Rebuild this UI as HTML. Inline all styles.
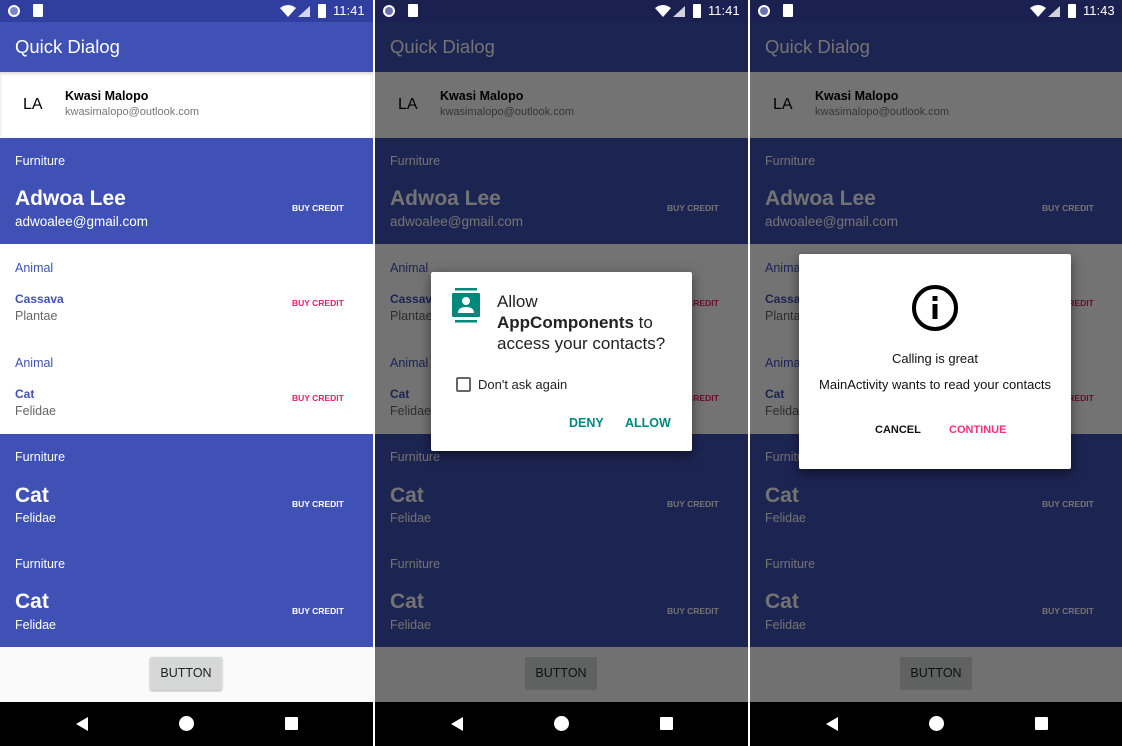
<!DOCTYPE html>
<html><head><meta charset="utf-8"><style>
*{margin:0;padding:0;box-sizing:border-box}
body{width:1122px;height:746px;background:#fff;position:relative;overflow:hidden;font-family:"Liberation Sans",Roboto,sans-serif}
.p{position:absolute;top:0;width:373px;height:746px;overflow:hidden;background:#fafafa}
.a{position:absolute;white-space:nowrap}
.sb{left:0;top:0;width:100%;height:22px;background:#303f9f}
.tb{left:0;top:22px;width:100%;height:50px;background:#3f51b5}
.blue{background:#3f51b5;left:0;width:100%}
.white{background:#fff;left:0;width:100%}
.w{color:#fff}
.bc{font-size:8.5px;font-weight:bold;color:#fff;left:292px}
.pk{color:#e91e63}
.nav{left:0;top:702px;width:100%;height:44px;background:#000}
.dim{left:0;top:0;width:100%;height:702px;background:rgba(0,0,0,.55)}
</style></head><body>

<div class="p" style="left:0">
 <div class="a tb"></div>
 <div class="a w" style="left:15px;top:36px;font-size:18.5px;line-height:22px">Quick Dialog</div>
 <div class="a white" style="top:72px;height:65px;box-shadow:0 2px 3px rgba(0,0,0,.15) inset"></div>
 <div class="a" style="left:23px;top:96px;font-size:16px;line-height:18px">LA</div>
 <div class="a" style="left:65px;top:88px;font-size:12.5px;font-weight:bold;line-height:16px">Kwasi Malopo</div>
 <div class="a" style="left:65px;top:105px;font-size:11px;color:#777;line-height:14px">kwasimalopo@outlook.com</div>
 <div class="a blue" style="top:138px;height:106px"></div>
 <div class="a w" style="left:15px;top:153px;font-size:12.5px;line-height:16px">Furniture</div>
 <div class="a w" style="left:15px;top:186px;font-size:21px;font-weight:bold;line-height:26px">Adwoa Lee</div>
 <div class="a w" style="left:15px;top:214px;font-size:13.5px;line-height:16px">adwoalee@gmail.com</div>
 <div class="a bc" style="top:203px">BUY CREDIT</div>
 <div class="a white" style="top:244px;height:190px"></div>
 <div class="a" style="left:15px;top:260px;font-size:12.5px;color:#3f51b5;line-height:16px">Animal</div>
 <div class="a" style="left:15px;top:292px;font-size:12px;font-weight:bold;color:#3f51b5;line-height:15px">Cassava</div>
 <div class="a" style="left:15px;top:308px;font-size:12.5px;color:#666;line-height:16px">Plantae</div>
 <div class="a bc pk" style="top:298px">BUY CREDIT</div>
 <div class="a" style="left:15px;top:355px;font-size:12.5px;color:#3f51b5;line-height:16px">Animal</div>
 <div class="a" style="left:15px;top:387px;font-size:12px;font-weight:bold;color:#3f51b5;line-height:15px">Cat</div>
 <div class="a" style="left:15px;top:403px;font-size:12.5px;color:#666;line-height:16px">Felidae</div>
 <div class="a bc pk" style="top:393px">BUY CREDIT</div>
 <div class="a blue" style="top:434px;height:213px"></div>
 <div class="a w" style="left:15px;top:449px;font-size:12.5px;line-height:16px">Furniture</div>
 <div class="a w" style="left:15px;top:483px;font-size:21px;font-weight:bold;line-height:26px">Cat</div>
 <div class="a w" style="left:15px;top:510px;font-size:12.5px;line-height:16px">Felidae</div>
 <div class="a bc" style="top:499px">BUY CREDIT</div>
 <div class="a w" style="left:15px;top:556px;font-size:12.5px;line-height:16px">Furniture</div>
 <div class="a w" style="left:15px;top:589px;font-size:21px;font-weight:bold;line-height:26px">Cat</div>
 <div class="a w" style="left:15px;top:617px;font-size:12.5px;line-height:16px">Felidae</div>
 <div class="a bc" style="top:606px">BUY CREDIT</div>
 <div class="a" style="left:150px;top:657px;width:72px;height:33px;background:#d6d7d7;border-radius:2px;box-shadow:0 1px 2px rgba(0,0,0,.3);text-align:center;line-height:33px;font-size:12.5px;color:#222">BUTTON</div>
 <div class="a sb"></div>
 <div class="a" style="left:8px;top:5px;width:12px;height:12px;border-radius:50%;background:#fff;border:2px solid #fff"><div style="width:8px;height:8px;border-radius:50%;background:#7986cb"></div></div>
 <div class="a" style="left:33px;top:4px;width:10px;height:13px;background:#fff;border-radius:1px"></div>
 <svg class="a" style="left:280px;top:4px" width="38" height="14"><path d="M0 4 Q8 -2 16 4 L8 13Z" fill="#fff"/><path d="M18 13 L30 13 L30 2Z" fill="#fff" opacity=".8"/></svg>
 <div class="a" style="left:318px;top:4px;width:8px;height:14px;background:#fff;border-radius:1px"></div>
 <div class="a w" style="left:333px;top:3px;font-size:13px;line-height:16px">11:41</div>
 <div class="a nav"></div>
 <svg class="a" style="left:74px;top:716px" width="16" height="16"><path d="M2 8 L14 1 L14 15Z" fill="#fff"/></svg>
 <div class="a" style="left:179px;top:716px;width:15px;height:15px;border-radius:50%;background:#fff"></div>
 <div class="a" style="left:285px;top:717px;width:13px;height:13px;background:#fff;border-radius:1px"></div>
</div>

<div class="p" style="left:375px">
 <div class="a tb"></div>
 <div class="a w" style="left:15px;top:36px;font-size:18.5px;line-height:22px">Quick Dialog</div>
 <div class="a white" style="top:72px;height:65px"></div>
 <div class="a" style="left:23px;top:96px;font-size:16px;line-height:18px">LA</div>
 <div class="a" style="left:65px;top:88px;font-size:12.5px;font-weight:bold;line-height:16px">Kwasi Malopo</div>
 <div class="a" style="left:65px;top:105px;font-size:11px;color:#777;line-height:14px">kwasimalopo@outlook.com</div>
 <div class="a blue" style="top:138px;height:106px"></div>
 <div class="a w" style="left:15px;top:153px;font-size:12.5px;line-height:16px">Furniture</div>
 <div class="a w" style="left:15px;top:186px;font-size:21px;font-weight:bold;line-height:26px">Adwoa Lee</div>
 <div class="a w" style="left:15px;top:214px;font-size:13.5px;line-height:16px">adwoalee@gmail.com</div>
 <div class="a bc" style="top:203px">BUY CREDIT</div>
 <div class="a white" style="top:244px;height:190px"></div>
 <div class="a" style="left:15px;top:260px;font-size:12.5px;color:#3f51b5;line-height:16px">Animal</div>
 <div class="a" style="left:15px;top:292px;font-size:12px;font-weight:bold;color:#3f51b5;line-height:15px">Cassava</div>
 <div class="a" style="left:15px;top:308px;font-size:12.5px;color:#666;line-height:16px">Plantae</div>
 <div class="a bc pk" style="top:298px">BUY CREDIT</div>
 <div class="a" style="left:15px;top:355px;font-size:12.5px;color:#3f51b5;line-height:16px">Animal</div>
 <div class="a" style="left:15px;top:387px;font-size:12px;font-weight:bold;color:#3f51b5;line-height:15px">Cat</div>
 <div class="a" style="left:15px;top:403px;font-size:12.5px;color:#666;line-height:16px">Felidae</div>
 <div class="a bc pk" style="top:393px">BUY CREDIT</div>
 <div class="a blue" style="top:434px;height:213px"></div>
 <div class="a w" style="left:15px;top:449px;font-size:12.5px;line-height:16px">Furniture</div>
 <div class="a w" style="left:15px;top:483px;font-size:21px;font-weight:bold;line-height:26px">Cat</div>
 <div class="a w" style="left:15px;top:510px;font-size:12.5px;line-height:16px">Felidae</div>
 <div class="a bc" style="top:499px">BUY CREDIT</div>
 <div class="a w" style="left:15px;top:556px;font-size:12.5px;line-height:16px">Furniture</div>
 <div class="a w" style="left:15px;top:589px;font-size:21px;font-weight:bold;line-height:26px">Cat</div>
 <div class="a w" style="left:15px;top:617px;font-size:12.5px;line-height:16px">Felidae</div>
 <div class="a bc" style="top:606px">BUY CREDIT</div>
 <div class="a" style="left:150px;top:657px;width:72px;height:33px;background:#d6d7d7;border-radius:2px;text-align:center;line-height:33px;font-size:12.5px;color:#222">BUTTON</div>
 <div class="a dim"></div>
 <div class="a sb" style="background:#1a2050"></div>
 <div class="a" style="left:8px;top:5px;width:12px;height:12px;border-radius:50%;background:#fff;border:2px solid #fff"><div style="width:8px;height:8px;border-radius:50%;background:#6a72b0"></div></div>
 <div class="a" style="left:33px;top:4px;width:10px;height:13px;background:#fff;border-radius:1px"></div>
 <svg class="a" style="left:280px;top:4px" width="38" height="14"><path d="M0 4 Q8 -2 16 4 L8 13Z" fill="#fff"/><path d="M18 13 L30 13 L30 2Z" fill="#fff" opacity=".8"/></svg>
 <div class="a" style="left:318px;top:4px;width:8px;height:14px;background:#fff;border-radius:1px"></div>
 <div class="a w" style="left:333px;top:3px;font-size:13px;line-height:16px">11:41</div>
 <div class="a nav"></div>
 <svg class="a" style="left:74px;top:716px" width="16" height="16"><path d="M2 8 L14 1 L14 15Z" fill="#fff"/></svg>
 <div class="a" style="left:179px;top:716px;width:15px;height:15px;border-radius:50%;background:#fff"></div>
 <div class="a" style="left:285px;top:717px;width:13px;height:13px;background:#fff;border-radius:1px"></div>
 <div class="a" style="left:56px;top:272px;width:261px;height:179px;background:#fff;border-radius:2px;box-shadow:0 4px 12px rgba(0,0,0,.5)"></div>
 <svg class="a" style="left:77px;top:288px" width="28" height="35"><rect x="3" y="0" width="22" height="2.5" fill="#00897b"/><rect x="3" y="32" width="22" height="2.5" fill="#00897b"/><rect x="0" y="5" width="28" height="24" rx="1" fill="#00897b"/><circle cx="14" cy="13" r="4" fill="#fff"/><path d="M6 25 Q6 19 14 19 Q22 19 22 25Z" fill="#fff"/></svg>
 <div class="a" style="left:122px;top:291px;font-size:17px;line-height:21px;color:#222">Allow<br><b>AppComponents</b> to<br>access your contacts?</div>
 <div class="a" style="left:81px;top:377px;width:15px;height:15px;border:2px solid #666;border-radius:2px"></div>
 <div class="a" style="left:103px;top:377px;font-size:13px;line-height:16px;color:#222">Don't ask again</div>
 <div class="a" style="left:194px;top:416px;font-size:12.5px;font-weight:bold;color:#00897b;line-height:15px">DENY</div>
 <div class="a" style="left:250px;top:416px;font-size:12.5px;font-weight:bold;color:#00897b;line-height:15px">ALLOW</div>
</div>

<div class="p" style="left:750px">
 <div class="a tb"></div>
 <div class="a w" style="left:15px;top:36px;font-size:18.5px;line-height:22px">Quick Dialog</div>
 <div class="a white" style="top:72px;height:65px"></div>
 <div class="a" style="left:23px;top:96px;font-size:16px;line-height:18px">LA</div>
 <div class="a" style="left:65px;top:88px;font-size:12.5px;font-weight:bold;line-height:16px">Kwasi Malopo</div>
 <div class="a" style="left:65px;top:105px;font-size:11px;color:#777;line-height:14px">kwasimalopo@outlook.com</div>
 <div class="a blue" style="top:138px;height:106px"></div>
 <div class="a w" style="left:15px;top:153px;font-size:12.5px;line-height:16px">Furniture</div>
 <div class="a w" style="left:15px;top:186px;font-size:21px;font-weight:bold;line-height:26px">Adwoa Lee</div>
 <div class="a w" style="left:15px;top:214px;font-size:13.5px;line-height:16px">adwoalee@gmail.com</div>
 <div class="a bc" style="top:203px">BUY CREDIT</div>
 <div class="a white" style="top:244px;height:190px"></div>
 <div class="a" style="left:15px;top:260px;font-size:12.5px;color:#3f51b5;line-height:16px">Animal</div>
 <div class="a" style="left:15px;top:292px;font-size:12px;font-weight:bold;color:#3f51b5;line-height:15px">Cassava</div>
 <div class="a" style="left:15px;top:308px;font-size:12.5px;color:#666;line-height:16px">Plantae</div>
 <div class="a bc pk" style="top:298px">BUY CREDIT</div>
 <div class="a" style="left:15px;top:355px;font-size:12.5px;color:#3f51b5;line-height:16px">Animal</div>
 <div class="a" style="left:15px;top:387px;font-size:12px;font-weight:bold;color:#3f51b5;line-height:15px">Cat</div>
 <div class="a" style="left:15px;top:403px;font-size:12.5px;color:#666;line-height:16px">Felidae</div>
 <div class="a bc pk" style="top:393px">BUY CREDIT</div>
 <div class="a blue" style="top:434px;height:213px"></div>
 <div class="a w" style="left:15px;top:449px;font-size:12.5px;line-height:16px">Furniture</div>
 <div class="a w" style="left:15px;top:483px;font-size:21px;font-weight:bold;line-height:26px">Cat</div>
 <div class="a w" style="left:15px;top:510px;font-size:12.5px;line-height:16px">Felidae</div>
 <div class="a bc" style="top:499px">BUY CREDIT</div>
 <div class="a w" style="left:15px;top:556px;font-size:12.5px;line-height:16px">Furniture</div>
 <div class="a w" style="left:15px;top:589px;font-size:21px;font-weight:bold;line-height:26px">Cat</div>
 <div class="a w" style="left:15px;top:617px;font-size:12.5px;line-height:16px">Felidae</div>
 <div class="a bc" style="top:606px">BUY CREDIT</div>
 <div class="a" style="left:150px;top:657px;width:72px;height:33px;background:#d6d7d7;border-radius:2px;text-align:center;line-height:33px;font-size:12.5px;color:#222">BUTTON</div>
 <div class="a dim"></div>
 <div class="a sb" style="background:#1a2050"></div>
 <div class="a" style="left:8px;top:5px;width:12px;height:12px;border-radius:50%;background:#fff;border:2px solid #fff"><div style="width:8px;height:8px;border-radius:50%;background:#6a72b0"></div></div>
 <div class="a" style="left:33px;top:4px;width:10px;height:13px;background:#fff;border-radius:1px"></div>
 <svg class="a" style="left:280px;top:4px" width="38" height="14"><path d="M0 4 Q8 -2 16 4 L8 13Z" fill="#fff"/><path d="M18 13 L30 13 L30 2Z" fill="#fff" opacity=".8"/></svg>
 <div class="a" style="left:318px;top:4px;width:8px;height:14px;background:#fff;border-radius:1px"></div>
 <div class="a w" style="left:333px;top:3px;font-size:13px;line-height:16px">11:43</div>
 <div class="a nav"></div>
 <svg class="a" style="left:74px;top:716px" width="16" height="16"><path d="M2 8 L14 1 L14 15Z" fill="#fff"/></svg>
 <div class="a" style="left:179px;top:716px;width:15px;height:15px;border-radius:50%;background:#fff"></div>
 <div class="a" style="left:285px;top:717px;width:13px;height:13px;background:#fff;border-radius:1px"></div>
 <div class="a" style="left:49px;top:254px;width:272px;height:215px;background:#fff;border-radius:2px;box-shadow:0 4px 12px rgba(0,0,0,.5)"></div>
 <svg class="a" style="left:161px;top:284px" width="48" height="48"><circle cx="24" cy="24" r="21" fill="none" stroke="#000" stroke-width="4"/><rect x="21.5" y="20" width="5" height="15" fill="#000"/><rect x="21.5" y="12" width="5" height="5" fill="#000"/></svg>
 <div class="a" style="left:49px;width:272px;top:351px;text-align:center;font-size:13px;line-height:16px;color:#111">Calling is great</div>
 <div class="a" style="left:49px;width:272px;top:377px;text-align:center;font-size:13px;line-height:16px;color:#111">MainActivity wants to read your contacts</div>
 <div class="a" style="left:125px;top:424px;font-size:11px;font-weight:bold;line-height:13px;color:#111">CANCEL</div>
 <div class="a" style="left:199px;top:424px;font-size:11px;font-weight:bold;line-height:13px;color:#ff2d7a">CONTINUE</div>
</div>
</body></html>
